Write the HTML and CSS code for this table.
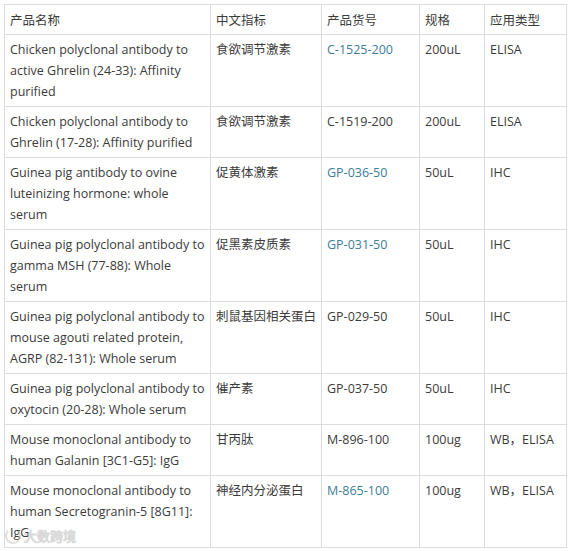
FILE: index.html
```html
<!DOCTYPE html>
<html lang="zh">
<head>
<meta charset="utf-8">
<link rel="stylesheet" href="styles.css">
</head>
<body>
<div class="wrap">
<table class="tbl">
<colgroup><col class="c1"><col class="c2"><col class="c3"><col class="c4"><col class="c5"></colgroup>
<thead>
<tr><th>产品名称</th><th>中文指标</th><th>产品货号</th><th>规格</th><th>应用类型</th></tr>
</thead>
<tbody>
<tr><td>Chicken polyclonal antibody to active Ghrelin (24-33): Affinity purified</td><td>食欲调节激素</td><td><a class="lnk">C-1525-200</a></td><td>200uL</td><td>ELISA</td></tr>
<tr><td>Chicken polyclonal antibody to Ghrelin (17-28): Affinity purified</td><td>食欲调节激素</td><td>C-1519-200</td><td>200uL</td><td>ELISA</td></tr>
<tr><td>Guinea pig antibody to ovine luteinizing hormone: whole serum</td><td>促黄体激素</td><td><a class="lnk">GP-036-50</a></td><td>50uL</td><td>IHC</td></tr>
<tr><td>Guinea pig polyclonal antibody to gamma MSH (77-88): Whole serum</td><td>促黑素皮质素</td><td><a class="lnk">GP-031-50</a></td><td>50uL</td><td>IHC</td></tr>
<tr><td>Guinea pig polyclonal antibody to mouse agouti related protein, AGRP (82-131): Whole serum</td><td>刺鼠基因相关蛋白</td><td>GP-029-50</td><td>50uL</td><td>IHC</td></tr>
<tr><td>Guinea pig polyclonal antibody to oxytocin (20-28): Whole serum</td><td>催产素</td><td>GP-037-50</td><td>50uL</td><td>IHC</td></tr>
<tr><td>Mouse monoclonal antibody to human Galanin [3C1-G5]: IgG</td><td>甘丙肽</td><td>M-896-100</td><td>100ug</td><td>WB，ELISA</td></tr>
<tr><td>Mouse monoclonal antibody to human Secretogranin-5 [8G11]: IgG</td><td>神经内分泌蛋白</td><td><a class="lnk">M-865-100</a></td><td>100ug</td><td>WB，ELISA</td></tr>
</tbody>
</table>
<div class="mark"><span class="mark-icon"></span><span class="mark-text">大数跨境</span></div>
</div>
</body>
</html>
```
FILE: styles.css
```css
html, body { margin: 0; padding: 0; background: #fff; }
.wrap { position: relative; padding: 4px 0 0 4px; width: 562px; }
.tbl {
  border-collapse: collapse;
  table-layout: fixed;
  width: 562px;
  font-family: "Open Sans", "Noto Sans CJK SC", sans-serif;
  font-size: 12.5px;
  line-height: 21px;
  color: #3b3b3b;
}
.c1 { width: 206px; } .c2 { width: 111px; } .c3 { width: 98px; } .c4 { width: 65px; } .c5 { width: 82px; }
.tbl th, .tbl td {
  border: 1px solid #dcdcdc;
  padding: 4px 5px 4px 5px;
  text-align: left;
  vertical-align: top;
  font-weight: normal;
}
.tbl th { font-family: "Noto Sans CJK SC", sans-serif; }
.lnk { color: #3d7c97; text-decoration: none; }
.mark { position: absolute; left: 5px; bottom: 3px; display: flex; align-items: center; gap: 3px; opacity: 0.55; }
.mark-icon { width: 12px; height: 12px; border: 2px solid #c8c8c8; border-radius: 50%; border-top-color: transparent; }
.mark-text { font-family: "Noto Sans CJK SC", sans-serif; font-size: 13px; color: #fff; -webkit-text-stroke: 1px #bbb; letter-spacing: 0; }
```
